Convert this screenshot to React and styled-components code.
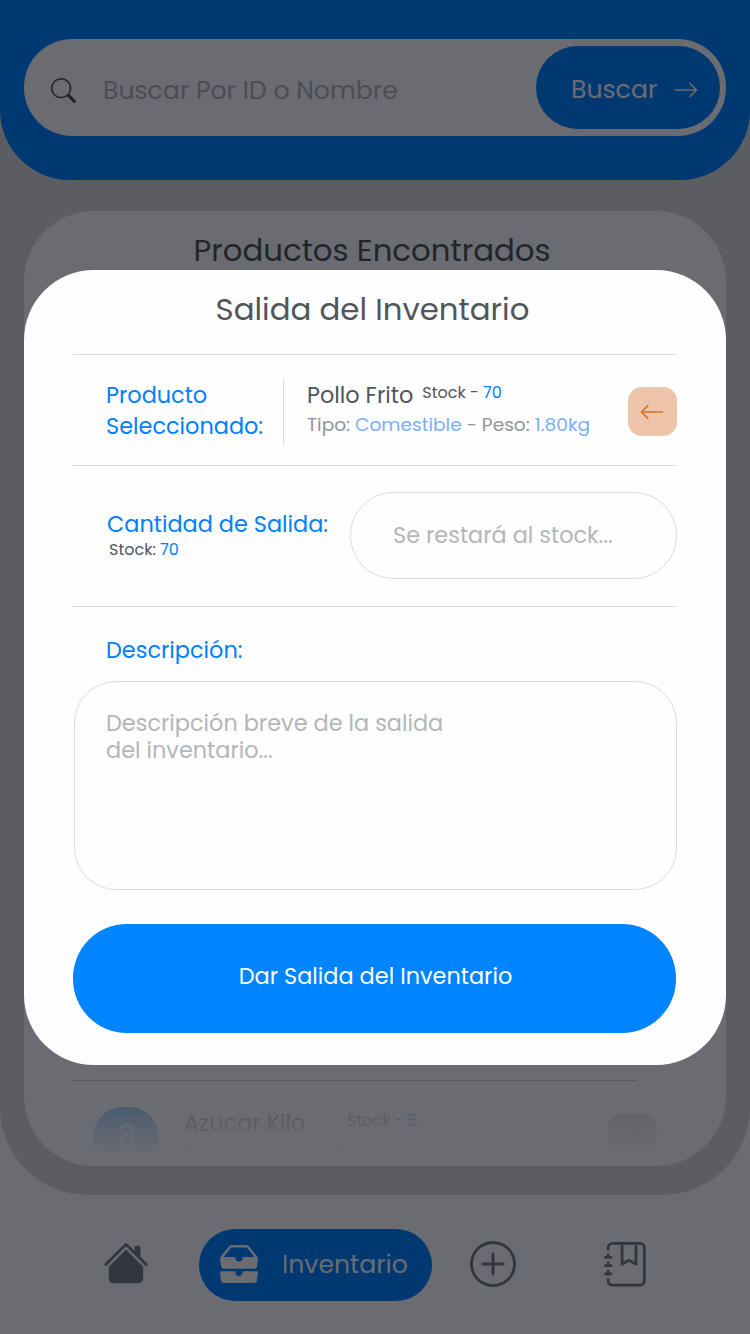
import React from 'react';
import styled, { createGlobalStyle } from 'styled-components';
import { BsSearch, BsArrowRight, BsArrowLeft, BsInboxesFill, BsPlusCircle, BsJournalBookmark } from 'react-icons/bs';

const Global = createGlobalStyle`
  * { box-sizing: border-box; }
  html, body { margin: 0; padding: 0; }
  body { width: 750px; height: 1334px; overflow: hidden; }
`;

const Screen = styled.div`
  position: relative;
  width: 750px;
  height: 1334px;
  overflow: hidden;
  background: #fefefe;
  font-family: Poppins, Inter, 'Liberation Sans', sans-serif;
  color: #50565c;
`;

const Label = styled.span`
  display: block;
  white-space: nowrap;
  font-size: ${p => p.$size}px;
  line-height: ${p => p.$line || 30}px;
  color: ${p => p.$color || 'inherit'};
`;

const Accent = styled.span`
  color: ${p => (p.$soft ? '#77aeff' : '#0080ff')};
`;

const Body = styled.div`
  height: 1195px;
  background: #dbdbdd;
  border-radius: 0 0 88px 88px;
`;

const Header = styled.header`
  height: 180px;
  padding: 39px 24px 0;
  background: #0084ff;
  border-radius: 0 0 70px 70px;
`;

const SearchBar = styled.div`
  display: flex;
  align-items: center;
  height: 97px;
  padding: 0 6px 0 27px;
  background: #fefefe;
  border-radius: 48px;
`;

const SearchIcon = styled(BsSearch)`
  margin-top: 6px;
`;

const SearchHint = styled.div`
  flex: 1;
  padding: 6px 0 0 27px;
`;

const SearchButton = styled.div`
  display: flex;
  align-items: center;
  justify-content: space-between;
  width: 184px;
  height: 83px;
  padding: 5px 21px 0 35px;
  border-radius: 42px;
  background: #0084ff;
  color: #fefefe;
`;

const Results = styled.section`
  display: flex;
  flex-direction: column;
  justify-content: space-between;
  height: 955px;
  margin: 31px 24px 0;
  padding-top: 20px;
  background: #fefefe;
  border-radius: 70px;
`;

const ResultsTitle = styled.div`
  display: flex;
  justify-content: center;
  padding-right: 6px;
`;

const FadingRow = styled.div`
  display: flex;
  height: 86px;
  margin: 0 89px 0 49px;
  padding: 26px 0 0 20px;
  border-top: 1px solid #d5d5d6;
`;

const Faded = styled.div`
  display: flex;
  align-items: flex-start;
  flex: 1;
  height: 54px;
  margin-right: -20px;
  mask-image: linear-gradient(rgba(0, 0, 0, 0.31), rgba(0, 0, 0, 0.14) 42%, transparent 90%);
`;

const Badge = styled.div`
  display: flex;
  justify-content: center;
  width: 66px;
  height: 60px;
  padding: 14px 0 0 2px;
  margin-right: 25px;
  border-radius: 34px;
  background: #0084ff;
  color: #e4e8ee;
`;

const FadedInfo = styled.div`
  flex: 1;
`;

const FadedLine = styled.div`
  display: flex;
`;

const FadedName = styled.div`
  width: 163px;
`;

const GoBox = styled.div`
  display: flex;
  align-items: center;
  justify-content: center;
  width: 49px;
  height: 49px;
  margin-top: 7px;
  border-radius: 14px;
  background: #b9bcbf;
`;

const Nav = styled.nav`
  display: flex;
  align-items: center;
  height: 139px;
  padding-left: 103px;
  color: #757f88;
`;

const NavItem = styled.div`
  display: flex;
  width: ${p => p.$width}px;
  margin: 0 0 ${p => p.$lift || 0}px ${p => p.$gap || 0}px;
`;

const NavActive = styled.div`
  display: flex;
  align-items: center;
  gap: 24px;
  width: 233px;
  height: 72px;
  margin-left: 50px;
  padding-left: 21px;
  border-radius: 36px;
  background: #0084ff;
  color: #fefefe;
`;

const InboxIcon = styled(BsInboxesFill)`
  margin-top: -2px;
`;

const Overlay = styled.div`
  position: absolute;
  inset: 0;
  padding: 270px 24px 0;
  background: rgba(0, 1, 10, 0.58);
`;

const Modal = styled.div`
  height: 795px;
  padding: 0 49px;
  border-radius: 70px;
  background: #fefefe;
`;

const ModalTitle = styled.div`
  display: flex;
  justify-content: center;
  height: 84px;
  padding: 20px 5px 0 0;
`;

const ProductRow = styled.div`
  display: flex;
  height: 111px;
  padding-top: 24px;
  border-top: 1px solid #dbdbdb;
`;

const ProductLabel = styled.div`
  width: 211px;
  height: 66px;
  padding: 1px 0 0 33px;
  border-right: 1px solid #dbdbdb;
`;

const ProductInfo = styled.div`
  flex: 1;
  padding: 1px 0 0 23px;
`;

const NameLine = styled.div`
  display: flex;
  gap: 9px;
`;

const BackButton = styled.div`
  display: flex;
  align-items: center;
  justify-content: center;
  width: 49px;
  height: 49px;
  margin-top: 8px;
  padding-right: 2px;
  border-radius: 14px;
  background: #eec5aa;
  color: #d5701e;
`;

const AmountRow = styled.div`
  display: flex;
  justify-content: space-between;
  height: 141px;
  padding: 26px 0 0 34px;
  border-top: 1px solid #dbdbdb;
`;

const AmountLabel = styled.div`
  padding-top: 17px;
`;

const StockNote = styled.div`
  padding: 1px 0 0 2px;
`;

const AmountField = styled.div`
  width: 327px;
  height: 87px;
  padding: 27px 0 0 42px;
  border: 1px solid #dbdbdb;
  border-radius: 43px;
`;

const Description = styled.div`
  padding: 28px 0 0 1px;
  border-top: 1px solid #dbdbdb;
`;

const DescriptionLabel = styled.div`
  height: 46px;
  padding-left: 32px;
`;

const DescriptionField = styled.div`
  height: 209px;
  padding: 28px 31px;
  border: 1px solid #dbdbdb;
  border-radius: 42px;
`;

const Submit = styled.div`
  display: flex;
  justify-content: center;
  width: 603px;
  height: 109px;
  margin-top: 34px;
  padding-top: 37px;
  padding-left: 2px;
  border-radius: 54px;
  background: #0084ff;
  color: #fefefe;
`;

const HouseIcon = () => (
  <svg width="46" height="46" viewBox="0 0 16 16" fill="currentColor">
    <path d="M8 3.293l6 6V13.5a1.5 1.5 0 0 1-1.5 1.5h-9A1.5 1.5 0 0 1 2 13.5V9.293l6-6zm5-.793V6l-2-2V2.5a.5.5 0 0 1 .5-.5h1a.5.5 0 0 1 .5.5z" />
    <path d="M7.293 1.5a1 1 0 0 1 1.414 0l6.647 6.646a.5.5 0 0 1-.708.708L8 2.207 1.354 8.854a.5.5 0 1 1-.708-.708L7.293 1.5z" />
  </svg>
);

export default function App() {
  return (
    <Screen>
      <Global />
      <Body>
        <Header>
          <SearchBar>
            <SearchIcon size={25} color="#4c565b" />
            <SearchHint>
              <Label $size={25.15} $color="#b4b6b8">Buscar Por ID o Nombre</Label>
            </SearchHint>
            <SearchButton>
              <Label $size={25.15}>Buscar</Label>
              <BsArrowRight size={26} />
            </SearchButton>
          </SearchBar>
        </Header>
        <Results>
          <ResultsTitle><Label $size={30.8} $line={40}>Productos Encontrados</Label></ResultsTitle>
          <FadingRow>
            <Faded>
              <Badge><Label $size={28}>8</Label></Badge>
              <FadedInfo>
                <FadedLine>
                  <FadedName><Label $size={22.4} $line={32}>Azucar Kilo</Label></FadedName>
                  <Label $size={16} $line={28}>Stock - <Accent>5</Accent></Label>
                </FadedLine>
                <Label $size={18.6} $line={28} $color="#929598">
                  Tipo: <Accent $soft>Abarrote</Accent> - Peso: <Accent $soft>1kg</Accent>
                </Label>
              </FadedInfo>
              <GoBox><BsArrowRight size={25} /></GoBox>
            </Faded>
          </FadingRow>
        </Results>
      </Body>
      <Nav>
        <NavItem $width={46} $lift={4}><HouseIcon /></NavItem>
        <NavActive>
          <InboxIcon size={38} />
          <Label $size={25.15}>Inventario</Label>
        </NavActive>
        <NavItem $width={46} $gap={38} $lift={2}><BsPlusCircle size={46} /></NavItem>
        <NavItem $width={45} $gap={88}><BsJournalBookmark size={44.5} /></NavItem>
      </Nav>
      <Overlay>
        <Modal>
          <ModalTitle><Label $size={30.8} $line={40}>Salida del Inventario</Label></ModalTitle>
          <ProductRow>
            <ProductLabel>
              <Label $size={22.4} $line={31} $color="#0080ff">Producto</Label>
              <Label $size={22.4} $line={31} $color="#0080ff">Seleccionado:</Label>
            </ProductLabel>
            <ProductInfo>
              <NameLine>
                <Label $size={22.4} $line={31}>Pollo Frito</Label>
                <Label $size={16} $line={26}>Stock - <Accent>70</Accent></Label>
              </NameLine>
              <Label $size={18.6} $line={28} $color="#929598">
                Tipo: <Accent $soft>Comestible</Accent> - Peso: <Accent $soft>1.80kg</Accent>
              </Label>
            </ProductInfo>
            <BackButton><BsArrowLeft size={26} /></BackButton>
          </ProductRow>
          <AmountRow>
            <AmountLabel>
              <Label $size={22.4} $line={30} $color="#0080ff">Cantidad de Salida:</Label>
              <StockNote><Label $size={16} $line={20}>Stock: <Accent>70</Accent></Label></StockNote>
            </AmountLabel>
            <AmountField><Label $size={22.4} $color="#b4b6b8">Se restará al stock...</Label></AmountField>
          </AmountRow>
          <Description>
            <DescriptionLabel><Label $size={22.4} $color="#0080ff">Descripción:</Label></DescriptionLabel>
            <DescriptionField>
              <Label $size={22.4} $line={27} $color="#b4b6b8">Descripción breve de la salida<br />del inventario...</Label>
            </DescriptionField>
          </Description>
          <Submit><Label $size={22.4}>Dar Salida del Inventario</Label></Submit>
        </Modal>
      </Overlay>
    </Screen>
  );
}
